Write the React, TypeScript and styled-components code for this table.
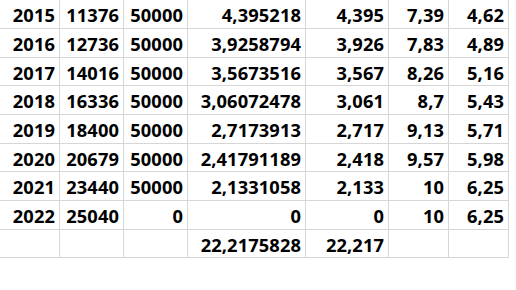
import React from "react";
import styled, { createGlobalStyle } from "styled-components";

const GlobalStyle = createGlobalStyle`
  html, body {
    margin: 0;
    padding: 0;
    background: #ffffff;
  }
`;

const Sheet = styled.div`
  display: grid;
  grid-template-columns: 60px 64px 64px 118px 83px 60px 60px;
  width: 509px;
  font-family: "Open Sans", "Liberation Sans", sans-serif;
  font-weight: 700;
  font-size: 18.3px;
  letter-spacing: 0.1px;
  color: #000000;
`;

const Cell = styled.div<{ $h: number }>`
  box-sizing: border-box;
  height: ${(p) => p.$h}px;
  border-right: 1px solid #d6d6d6;
  border-bottom: 1px solid #d6d6d6;
  padding: 3px 4px 0 0;
  display: flex;
  align-items: center;
  justify-content: flex-end;
  line-height: 1;
  white-space: nowrap;
`;

const rows: string[][] = [
  ["2015", "11376", "50000", "4,395218", "4,395", "7,39", "4,62"],
  ["2016", "12736", "50000", "3,9258794", "3,926", "7,83", "4,89"],
  ["2017", "14016", "50000", "3,5673516", "3,567", "8,26", "5,16"],
  ["2018", "16336", "50000", "3,06072478", "3,061", "8,7", "5,43"],
  ["2019", "18400", "50000", "2,7173913", "2,717", "9,13", "5,71"],
  ["2020", "20679", "50000", "2,41791189", "2,418", "9,57", "5,98"],
  ["2021", "23440", "50000", "2,1331058", "2,133", "10", "6,25"],
  ["2022", "25040", "0", "0", "0", "10", "6,25"],
  ["", "", "", "22,2175828", "22,217", "", ""],
];

const heights = [29, 29, 28, 29, 29, 28, 29, 29, 28];

export default function App() {
  return (
    <>
      <GlobalStyle />
      <Sheet>
        {rows.map((r, i) =>
          r.map((v, j) => (
            <Cell key={`${i}-${j}`} $h={heights[i]}>
              {v}
            </Cell>
          ))
        )}
      </Sheet>
    </>
  );
}
